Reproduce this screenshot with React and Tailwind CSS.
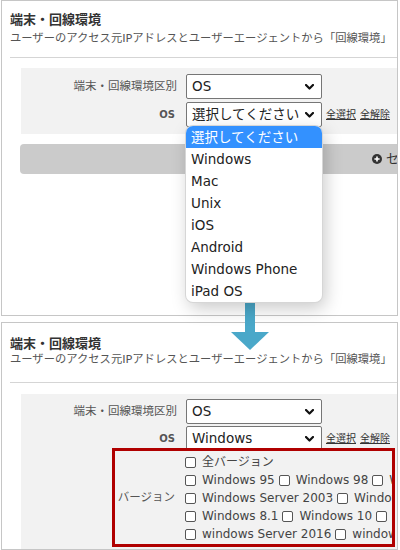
import React from "react";

const options = [
  "選択してください",
  "Windows",
  "Mac",
  "Unix",
  "iOS",
  "Android",
  "Windows Phone",
  "iPad OS",
];

const versionRows = [
  ["全バージョン"],
  ["Windows 95", "Windows 98", "Windows ME", "Windows 2000"],
  ["Windows Server 2003", "Windows Vista", "Windows 7"],
  ["Windows 8.1", "Windows 10", "windows Server 2012"],
  ["windows Server 2016", "windows Server 2019"],
];

function Chevron() {
  return (
    <svg width="9" height="6" viewBox="0 0 9 6" className="shrink-0">
      <polyline
        points="1,1 4.5,4.5 8,1"
        fill="none"
        stroke="#111"
        strokeWidth="2.2"
        strokeLinecap="round"
        strokeLinejoin="round"
      />
    </svg>
  );
}

function Select({ value }) {
  return (
    <div className="flex items-center justify-between w-[136px] h-[25px] shrink-0 border border-[#767676] rounded-[2px] bg-white pl-[5px] pr-[7px] text-[13.5px] text-[#222] whitespace-nowrap">
      <span>{value}</span>
      <Chevron />
    </div>
  );
}

function Row({ label, value, bold, links, className = "" }) {
  return (
    <div className={"flex items-center " + className}>
      <div
        className={
          bold
            ? "w-[156px] shrink-0 text-right pr-[2px] text-[10px] font-bold text-[#555]"
            : "w-[156px] shrink-0 text-right text-[11.5px] text-[#555]"
        }
      >
        {label}
      </div>
      <div className="ml-[9px]">
        <Select value={value} />
      </div>
      {links && (
        <div className="ml-[4px] text-[10px] text-[#333] whitespace-nowrap">
          <span className="underline">全選択</span>
          <span className="ml-[4px] underline">全解除</span>
        </div>
      )}
    </div>
  );
}

function Check({ label }) {
  return (
    <span className="flex items-center mr-[4px] shrink-0">
      <span className="w-[11px] h-[11px] border border-[#555] rounded-[2px] bg-white" />
      <span className="ml-[6px] text-[12px] text-[#444]">{label}</span>
    </span>
  );
}

function Heading({ top, desc }) {
  return (
    <>
      <h2 className={"pl-[8px] text-[13px] leading-[17px] font-bold text-[#333] whitespace-nowrap " + top}>
        端末・回線環境
      </h2>
      <p className={"pl-[8px] text-[11.3px] text-[#555] whitespace-nowrap " + desc}>
        ユーザーのアクセス元IPアドレスとユーザーエージェントから「回線環境」
      </p>
    </>
  );
}

export default function App() {
  return (
    <div className="relative w-[400px] h-[550px] overflow-hidden bg-white font-['DejaVu_Sans','Noto_Sans_CJK_JP',sans-serif] text-[#333]">
      {/* before: OS dropdown open */}
      <section className="ml-[1px] w-[397px] h-[316px] border border-[#c6c6c6] overflow-hidden">
        <Heading top="pt-[10px]" desc="mt-[2px] leading-[17px]" />
        <div className="ml-[8px] mt-[10px] h-px bg-[#d5d5d5]" />
        <div className="ml-[19px] mt-[10px] w-[420px] bg-[#f2f2f2] pt-[6px] pb-[7px] flex flex-col gap-[3px]">
          <Row label="端末・回線環境区別" value="OS" />
          <Row label="OS" value="選択してください" bold links />
        </div>
        <div className="ml-[18px] mt-[10px] w-[500px] h-[30px] rounded-[4px] bg-[#cbcbcb] flex items-center pl-[352px] text-[13px] text-[#333] whitespace-nowrap">
          <svg width="10" height="10" viewBox="0 0 10 10" className="shrink-0">
            <circle cx="5" cy="5" r="5" fill="#333" />
            <path d="M5 2.4v5.2M2.4 5h5.2" stroke="#fff" strokeWidth="1.6" />
          </svg>
          <span className="ml-[4px]">セグメントを追加</span>
        </div>
      </section>

      {/* after: Windows selected */}
      <section className="ml-[1px] mt-[6px] w-[397px] h-[228px] border border-[#c6c6c6] overflow-hidden">
        <Heading top="pt-[12px]" desc="leading-[15px]" />
        <div className="ml-[8px] mt-[15px] h-px bg-[#d5d5d5]" />
        <div className="ml-[19px] mt-[11px] w-[420px] h-[200px] bg-[#f2f2f2] pt-[5px]">
          <Row label="端末・回線環境区別" value="OS" />
          <Row label="OS" value="Windows" bold links className="mt-[2px]" />
          <div className="relative -mt-[3px] ml-[91px] w-[283px] h-[99px] border-[3px] border-[#b00000] flex items-center overflow-hidden">
            <div className="w-[60px] shrink-0 text-right text-[11.5px] text-[#555]">バージョン</div>
            <div className="ml-[10px] self-start pt-[2px] flex flex-col">
              {versionRows.map((row, i) => (
                <div key={i} className="flex items-center h-[18px] whitespace-nowrap">
                  {row.map((v) => (
                    <Check key={v} label={v} />
                  ))}
                </div>
              ))}
            </div>
          </div>
        </div>
      </section>

      {/* arrow between the two states */}
      <svg width="38" height="50" viewBox="0 0 38 50" className="absolute left-[231px] top-[300px]">
        <rect x="14" y="0" width="10" height="33" fill="#4aa8c9" />
        <polygon points="0,32 38,32 19,50" fill="#4aa8c9" />
      </svg>

      {/* open option list */}
      <div className="absolute left-[186px] top-[126px] w-[136px] rounded-[7px] bg-white overflow-hidden ring-1 ring-[#d6d6d6] shadow-[3px_6px_18px_rgba(0,0,0,0.22)]">
        {options.map((o, i) => (
          <div
            key={o}
            className={
              i === 0
                ? "h-[22px] flex items-center pl-[5px] text-[13.5px] bg-[#3391ff] text-white whitespace-nowrap"
                : "h-[22px] flex items-center pl-[5px] text-[13.5px] text-[#222] whitespace-nowrap"
            }
          >
            {o}
          </div>
        ))}
      </div>
    </div>
  );
}
